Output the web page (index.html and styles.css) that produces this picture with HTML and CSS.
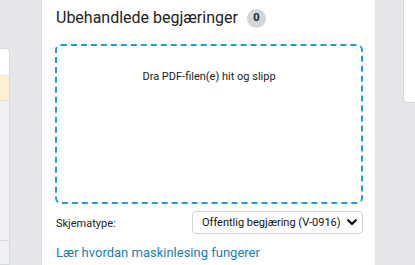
FILE: index.html
```html
<!DOCTYPE html>
<html lang="no">
<head>
<meta charset="utf-8">
<link rel="stylesheet" href="styles.css">
</head>
<body>
<div class="page">
  <div class="left-card">
    <div class="lc-head"></div>
    <div class="lc-warn"></div>
    <div class="lc-body"></div>
    <div class="lc-foot"></div>
  </div>
  <main class="panel">
    <h2 class="title">Ubehandlede begjæringer <span class="badge">0</span></h2>
    <div class="dropzone">Dra PDF-filen(e) hit og slipp</div>
    <div class="form-row">
      <label class="label">Skjematype:</label>
      <div class="select">
        <span class="select-text">Offentlig begjæring (V-0916)</span>
        <svg class="chev" width="10" height="7" viewBox="0 0 10 7"><path d="M1.2 1.2 L5 5 L8.8 1.2" fill="none" stroke="#111" stroke-width="2.2" stroke-linecap="round" stroke-linejoin="round"/></svg>
      </div>
    </div>
    <a class="link" href="#">Lær hvordan maskinlesing fungerer</a>
  </main>
  <div class="right-card"></div>
</div>
</body>
</html>
```
FILE: styles.css
```css
html, body {
  margin: 0;
  padding: 0;
}
body {
  background: #e5e7eb;
  font-family: Roboto, "Liberation Sans", sans-serif;
  color: #222;
  width: 415px;
  height: 265px;
  overflow: hidden;
}
.page {
  display: flex;
  align-items: flex-start;
  height: 265px;
  overflow: hidden;
}
.left-card {
  width: 10px;
  margin-top: 48px;
  flex: none;
  border: 1px solid #d6d9de;
  border-left: none;
  border-top-right-radius: 4px;
  background: #f0f1f3;
  height: 217px;
  display: flex;
  flex-direction: column;
  box-sizing: border-box;
}
.lc-head {
  height: 26px;
  background: #fff;
  border-bottom: 1px solid #e3e5e8;
  border-top-right-radius: 4px;
}
.lc-warn {
  height: 24px;
  background: #fcefd6;
  border-bottom: 1px solid #e3e5e8;
}
.lc-body {
  height: 139px;
  border-bottom: 1px solid #d6d9de;
}
.lc-foot {
  flex: 1;
}
.panel {
  margin-left: 31px;
  width: 334px;
  height: 265px;
  flex: none;
  background: #fff;
  border-left: 1px solid #dcdfe3;
  box-sizing: border-box;
  padding: 8px 12px 0 13px;
  display: flex;
  flex-direction: column;
  overflow: hidden;
}
.title {
  margin: 0;
  font-size: 16px;
  font-weight: 400;
  line-height: 20px;
  color: #222;
  display: flex;
  align-items: center;
  gap: 9px;
  padding-left: 1px;
}
.badge {
  display: inline-flex;
  align-items: center;
  justify-content: center;
  width: 19px;
  height: 19px;
  border-radius: 50%;
  background: #d3d6db;
  font-size: 11px;
  font-weight: 700;
  color: #222;
}
.dropzone {
  margin-top: 16px;
  height: 160px;
  flex: none;
  box-sizing: border-box;
  border: 2px dashed #1c9ed6;
  border-radius: 6px;
  text-align: center;
  font-size: 11px;
  line-height: 14px;
  padding-top: 24px;
  color: #222;
}
.form-row {
  margin-top: 7px;
  display: flex;
  align-items: center;
  justify-content: space-between;
}
.label {
  font-size: 11px;
  padding-left: 1px;
  padding-top: 1px;
  color: #222;
}
.select {
  width: 171px;
  height: 23px;
  box-sizing: border-box;
  border: 1px solid #cfd3d8;
  border-radius: 4px;
  display: flex;
  align-items: center;
  justify-content: space-between;
  padding: 0 5px 0 9px;
  font-size: 11px;
  white-space: nowrap;
  color: #111;
}
.link {
  margin-top: 11px;
  font-size: 13px;
  color: #1a7eb4;
  text-decoration: none;
  padding-left: 1px;
}
.right-card {
  margin-left: 28px;
  flex: 1;
  height: 103px;
  background: #fff;
  border-left: 1px solid #d6d9de;
  border-bottom: 1px solid #d6d9de;
  border-bottom-left-radius: 4px;
  box-sizing: border-box;
}
```
